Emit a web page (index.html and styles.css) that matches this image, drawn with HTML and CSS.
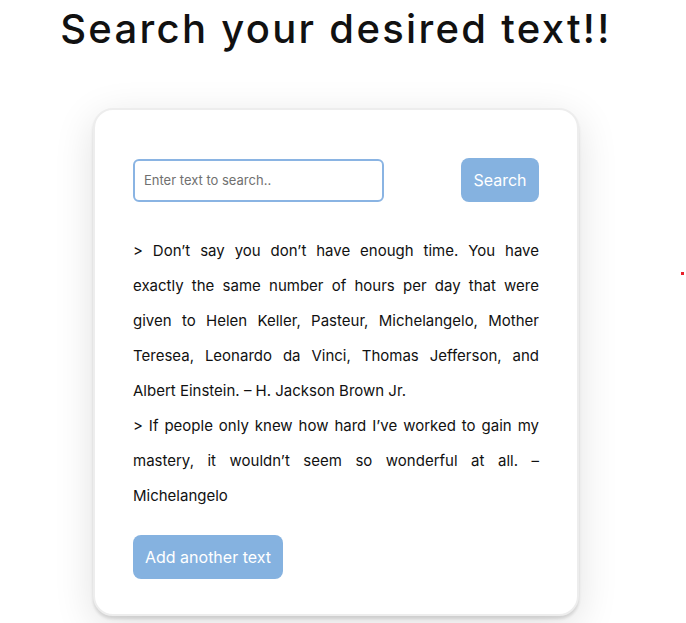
FILE: index.html
```html
<!DOCTYPE html>
<html lang="en">
<head>
<meta charset="utf-8">
<title>Search text</title>
<link rel="stylesheet" href="styles.css">
</head>
<body>
<main class="page">
  <h1 class="title">Search your desired text!!</h1>
  <section class="card">
    <div class="search-row">
      <input class="search-input" type="text" placeholder="Enter text to search..">
      <button class="btn search-btn">Search</button>
    </div>
    <p class="quotes">&gt; Don’t say you don’t have enough time. You have exactly the same number of hours per day that were given to Helen Keller, Pasteur, Michelangelo, Mother Teresea, Leonardo da Vinci, Thomas Jefferson, and Albert Einstein. – H. Jackson Brown Jr.<br>&gt; If people only knew how hard I’ve worked to gain my mastery, it wouldn’t seem so wonderful at all. – Michelangelo</p>
    <button class="btn add-btn">Add another text</button>
  </section>
</main>
<span class="dot"></span>
</body>
</html>
```
FILE: styles.css
```css
html, body {
  margin: 0;
  padding: 0;
  background: #ffffff;
}
body {
  font-family: "Inter", "Noto Sans", sans-serif;
  color: #111;
  position: relative;
  min-height: 623px;
}
.page {
  width: 672px;
  display: flex;
  flex-direction: column;
  align-items: center;
}
.title {
  margin: 5px 0 0;
  font-size: 40px;
  font-weight: 500;
  letter-spacing: 2.3px;
  line-height: 48px;
}
.card {
  margin-top: 55px;
  width: 486px;
  box-sizing: border-box;
  padding: 48px 38px 35px;
  background: #fff;
  border: 2px solid #ededed;
  border-radius: 20px;
  box-shadow: 0 3px 3px rgba(0,0,0,0.12), 0 10px 40px rgba(0,0,0,0.12);
}
.search-row {
  display: flex;
  justify-content: space-between;
  align-items: center;
}
.search-input {
  width: 251px;
  height: 43px;
  box-sizing: border-box;
  border: 2px solid #8ab4e3;
  border-radius: 6px;
  padding: 0 9px;
  font-family: inherit;
  font-size: 13px;
  outline: none;
}
.search-input::placeholder {
  color: #707070;
}
.btn {
  height: 44px;
  border: none;
  border-radius: 8px;
  background: #85b2e0;
  color: #fff;
  font-family: inherit;
  font-size: 16px;
  padding: 0;
  white-space: nowrap;
}
.search-btn {
  width: 78px;
}
.add-btn {
  width: 150px;
}
.quotes {
  margin: 31px 0 22px;
  font-size: 15px;
  line-height: 35px;
  text-align: justify;
}
.dot {
  position: absolute;
  left: 681px;
  top: 272px;
  width: 3px;
  height: 3px;
  background: #e8202a;
}
```
